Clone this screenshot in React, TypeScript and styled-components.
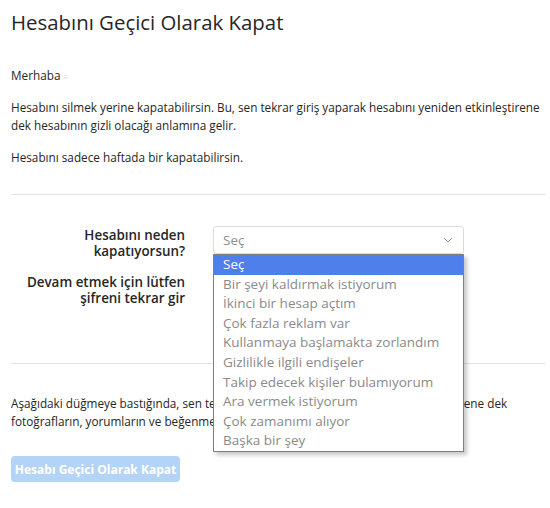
import React from "react";
import styled, { createGlobalStyle } from "styled-components";

const GlobalStyle = createGlobalStyle`
  html, body { margin: 0; padding: 0; background: #ffffff; }
  body {
    font-family: "Open Sans", "Noto Sans", "Liberation Sans", sans-serif;
    color: #262626;
  }
  * { box-sizing: border-box; }
`;

const Page = styled.div`
  width: 550px;
  height: 508px;
  padding: 8px 5px 0 11px;
  overflow: hidden;
`;

const Title = styled.h1`
  margin: 0;
  font-size: 20.4px;
  line-height: 28px;
  font-weight: 400;
  color: #262626;
`;

const Text = styled.p<{ $mt?: number }>`
  margin: ${(p) => p.$mt ?? 13}px 0 0 0;
  font-size: 11.75px;
  line-height: 18px;
  color: #262626;
`;

const Faint = styled.span`
  color: #dcdcdc;
  font-size: 8px;
  margin-left: 3px;
`;

const Divider = styled.hr<{ $mt: number }>`
  margin: ${(p) => p.$mt}px 0 0 0;
  border: none;
  border-top: 1px solid #e3e3e3;
  height: 0;
`;

const Form = styled.div`
  margin-top: 31px;
  display: grid;
  grid-template-columns: 174px 251px;
  column-gap: 28px;
  row-gap: 14px;
  align-items: start;
`;

const Label = styled.label`
  font-size: 13.4px;
  line-height: 16px;
  font-weight: 600;
  text-align: right;
  color: #262626;
  padding-top: 1px;
`;

const SelectWrap = styled.div`
  position: relative;
`;

const SelectBox = styled.div`
  height: 28px;
  border: 1px solid #dbdbdb;
  border-radius: 3px;
  background: #fff;
  display: flex;
  align-items: center;
  justify-content: space-between;
  padding: 0 10px 0 9px;
  font-size: 13.5px;
  color: #8e8e8e;
`;

const Input = styled.div`
  height: 28px;
  border: 1px solid #dbdbdb;
  border-radius: 3px;
  background: #fafafa;
`;

const Menu = styled.ul`
  position: absolute;
  top: 100%;
  left: 0;
  width: 251px;
  margin: 0;
  padding: 0;
  list-style: none;
  background: #fff;
  border: 1px solid #7f7f7f;
  box-shadow: 3px 3px 4px rgba(0, 0, 0, 0.22);
  z-index: 5;
`;

const Option = styled.li<{ $active?: boolean }>`
  height: 19.6px;
  line-height: 19.6px;
  padding-left: 9px;
  font-size: 13.5px;
  color: ${(p) => (p.$active ? "#ffffff" : "#8a8a8a")};
  background: ${(p) => (p.$active ? "#4f7fea" : "transparent")};
  white-space: nowrap;
`;

const Button = styled.button`
  margin-top: 26px;
  height: 26px;
  width: 169px;
  border: none;
  border-radius: 4px;
  background: #b4d4f7;
  color: #ffffff;
  font-family: inherit;
  font-weight: 700;
  font-size: 12px;
  padding: 0;
  display: block;
`;

const options = [
  "Seç",
  "Bir şeyi kaldırmak istiyorum",
  "İkinci bir hesap açtım",
  "Çok fazla reklam var",
  "Kullanmaya başlamakta zorlandım",
  "Gizlilikle ilgili endişeler",
  "Takip edecek kişiler bulamıyorum",
  "Ara vermek istiyorum",
  "Çok zamanımı alıyor",
  "Başka bir şey",
];

const Chevron = () => (
  <svg width="10" height="6" viewBox="0 0 10 6" fill="none">
    <path d="M1 1 L5 5 L9 1" stroke="#9a9a9a" strokeWidth="1" />
  </svg>
);

export default function App() {
  return (
    <>
      <GlobalStyle />
      <Page>
        <Title>Hesabını Geçici Olarak Kapat</Title>
        <Text $mt={30}>
          Merhaba<Faint>≡</Faint>
        </Text>
        <Text $mt={12}>
          Hesabını silmek yerine kapatabilirsin. Bu, sen tekrar giriş yaparak hesabını yeniden
          etkinleştirene dek hesabının gizli olacağı anlamına gelir.
        </Text>
        <Text $mt={14}>Hesabını sadece haftada bir kapatabilirsin.</Text>
        <Divider $mt={28} />
        <Form>
          <Label>
            Hesabını neden
            <br />
            kapatıyorsun?
          </Label>
          <SelectWrap>
            <SelectBox>
              <span>Seç</span>
              <Chevron />
            </SelectBox>
            <Menu>
              {options.map((o, i) => (
                <Option key={o} $active={i === 0}>
                  {o}
                </Option>
              ))}
            </Menu>
          </SelectWrap>
          <Label>
            Devam etmek için lütfen
            <br />
            şifreni tekrar gir
          </Label>
          <Input />
        </Form>
        <Divider $mt={57} />
        <Text $mt={30}>
          Aşağıdaki düğmeye bastığında, sen tekrar giriş yaparak hesabını yeniden etkinleştirene dek
          fotoğrafların, yorumların ve beğenmelerin gizlenecek.
        </Text>
        <Button>Hesabı Geçici Olarak Kapat</Button>
      </Page>
    </>
  );
}
